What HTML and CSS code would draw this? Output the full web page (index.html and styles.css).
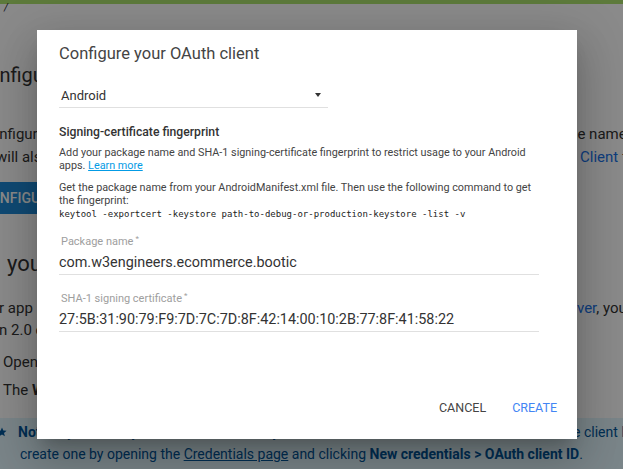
FILE: index.html
```html
<!DOCTYPE html>
<html>
<head>
<meta charset="utf-8">
<link rel="stylesheet" href="styles.css">
</head>
<body>
<div class="page">
  <div class="topbar"></div>
  <div class="crumb">/</div>
  <div class="row h1row"><span class="cut25">Configure the OAuth consent screen</span></div>
  <div class="row p1"><span class="cut19">Configure the screen that users see, including the package name</span><span class="right r569">ge name</span></div>
  <div class="row p2"><span class="cut6">will also use the <a class="blink">Client</a></span><span class="right r580"><a class="blink">Client</a> f</span></div>
  <div class="row btnrow"><span class="bgbtn">CONFIGURE</span></div>
  <div class="row h2row"><span class="pad7">your app</span></div>
  <div class="row p3"><span class="cut2">r app is hosted</span><span class="right r577"><a class="blink">ver</a>, you</span></div>
  <div class="row p4"><span class="cut2">n 2.0 client</span></div>
  <div class="row p5"><span class="pad3">Open the page</span></div>
  <div class="row p6"><span class="pad3">The <b>Web</b></span></div>
  <div class="note">
    <div class="noteline1">
      <svg class="star" width="10" height="10" viewBox="0 0 10 10"><path d="M5 0.5 L6.3 3.6 L9.6 3.8 L7 5.9 L7.9 9.3 L5 7.4 L2.1 9.3 L3 5.9 L0.4 3.8 L3.7 3.6 Z" fill="#01579b"/></svg>
      <span class="notel"><b>Note:</b> if you already have an OAuth client you can use</span>
      <span class="right r573">e client ID</span>
    </div>
    <div class="noteline2">create one by opening the <u>Credentials page</u> and clicking <b>New credentials &gt; OAuth client ID</b>.</div>
  </div>
</div>
<div class="scrim"></div>
<div class="dialog">
  <div class="title">Configure your OAuth client</div>
  <div class="select"><span>Android</span><span class="caret"></span></div>
  <div class="sect">Signing-certificate fingerprint</div>
  <p class="para1">Add your package name and SHA-1 signing-certificate fingerprint to restrict usage to your Android apps. <a class="learn">Learn more</a></p>
  <p class="para2">Get the package name from your AndroidManifest.xml file. Then use the following command to get the fingerprint:<br><code>keytool -exportcert -keystore path-to-debug-or-production-keystore -list -v</code></p>
  <div class="field f1">
    <div class="label">Package name<sup>*</sup></div>
    <div class="value">com.w3engineers.ecommerce.bootic</div>
  </div>
  <div class="field f2">
    <div class="label">SHA-1 signing certificate<sup>*</sup></div>
    <div class="value">27:5B:31:90:79:F9:7D:7C:7D:8F:42:14:00:10:2B:77:8F:41:58:22</div>
  </div>
  <div class="actions">
    <span class="btn cancel">CANCEL</span>
    <span class="btn create">CREATE</span>
  </div>
</div>
</body>
</html>
```

FILE: styles.css
```css
html, body {
  margin: 0;
  padding: 0;
}
body {
  width: 623px;
  height: 469px;
  overflow: hidden;
  position: relative;
  font-family: Roboto, "Liberation Sans", sans-serif;
  background: #fff;
}
.page {
  width: 623px;
  height: 469px;
  display: flex;
  flex-direction: column;
  color: #333;
  overflow: hidden;
}
.topbar {
  height: 4px;
  background: #ace26d;
  flex: none;
}
.crumb {
  height: 14px;
  font-size: 10px;
  line-height: 8px;
  padding-left: 4px;
  color: #222;
  font-style: italic;
}
.row {
  display: flex;
  justify-content: space-between;
  white-space: nowrap;
  flex: none;
}
.right { flex: none; overflow: hidden; }
.r569 { width: 54px; }
.r573 { width: 50px; }
.r580 { width: 43px; }
.r577 { width: 46px; }
.cut25 { margin-left: -25px; }
.cut19 { margin-left: -19px; }
.cut6 { margin-left: -4px; }
.cut2 { margin-left: -1px; }
.pad7 { margin-left: 7px; }
.pad3 { margin-left: 3px; }
.blink { color: #1a73e8; }
.h1row {
  font-size: 20px;
  line-height: 30px;
  margin-top: 42px;
}
.p1 { font-size: 15px; line-height: 22px; margin-top: 33px; }
.p2 { font-size: 15px; line-height: 22px; margin-top: 1px; }
.btnrow { margin-top: 14px; height: 32px; }
.bgbtn {
  background: #1e8ad6;
  color: #fff;
  font-weight: 500;
  font-size: 14px;
  line-height: 32px;
  padding: 0 20px 0 0;
  margin-left: -19px;
  width: 120px;
}
.h2row { font-size: 22px; line-height: 28px; margin-top: 36px; }
.p3 { font-size: 15px; line-height: 22px; margin-top: 19px; }
.p4 { font-size: 15px; line-height: 22px; margin-top: 0; }
.p5 { font-size: 15px; line-height: 22px; margin-top: 10px; }
.p6 { font-size: 15px; line-height: 22px; margin-top: 6px; }
.note {
  margin-top: 17px;
  background: #e1f5fe;
  color: #01579b;
  font-size: 14px;
  flex: 1;
  padding-top: 5px;
}
.noteline1 {
  display: flex;
  align-items: center;
  white-space: nowrap;
  line-height: 18px;
  justify-content: space-between;
}
.star { margin-left: -3px; flex: none; }
.notel { margin-left: 11px; flex: 1; overflow: hidden; }
.noteline2 {
  padding-left: 20px;
  line-height: 20px;
  margin-top: 3px;
  white-space: nowrap;
}
.scrim {
  position: absolute;
  inset: 0;
  background: rgba(0, 0, 0, 0.46);
}
.dialog {
  position: absolute;
  left: 37px;
  top: 30px;
  width: 540px;
  height: 409px;
  box-sizing: border-box;
  padding: 0 38px 0 22px;
  background: #fff;
  display: flex;
  flex-direction: column;
  box-shadow: 0 11px 15px -7px rgba(0,0,0,.2), 0 24px 38px 3px rgba(0,0,0,.14), 0 9px 46px 8px rgba(0,0,0,.12);
  color: #333;
}
.title {
  padding-top: 12px;
  font-size: 16.5px;
  line-height: 24px;
  color: #444;
}
.select {
  margin-top: 19px;
  width: 269px;
  box-sizing: border-box;
  padding: 0 7px 0 2px;
  line-height: 22px;
  font-size: 13px;
  color: #333;
  border-bottom: 1px solid #e0e0e0;
  display: flex;
  justify-content: space-between;
  align-items: center;
}
.caret {
  width: 0;
  height: 0;
  border-left: 3.5px solid transparent;
  border-right: 3.5px solid transparent;
  border-top: 4px solid #333;
  margin-bottom: 3px;
}
.sect {
  margin-top: 16px;
  font-size: 12.2px;
  font-weight: 500;
  line-height: 16px;
  color: #333;
}
p { margin: 0; }
.para1, .para2 {
  font-size: 10.8px;
  line-height: 13px;
  color: #444;
}
.para1 { margin-top: 6px; }
.para2 { margin-top: 9px; }
.learn { color: #039be5; text-decoration: underline; }
code {
  font-family: "DejaVu Sans Mono", monospace;
  font-size: 9px;
  color: #222;
}
.field { border-bottom: 1px solid #e0e0e0; }
.f1 { margin-top: 14px; }
.f2 { margin-top: 17px; }
.label {
  font-size: 11px;
  line-height: 14px;
  color: #9e9e9e;
  padding-left: 2px;
}
.label sup { font-size: 8px; vertical-align: 4px; line-height: 0; margin-left: 2px; }
.value {
  margin-top: 3px;
  font-size: 14.4px;
  line-height: 22px;
  color: #333;
}
.actions {
  margin-top: auto;
  margin-bottom: 13px;
  margin-right: -26px;
  display: flex;
  justify-content: flex-end;
  gap: 10px;
}
.btn {
  font-size: 12.5px;
  line-height: 36px;
  padding: 0 8px;
}
.cancel { color: #444; }
.create { color: #4285f4; }
```
